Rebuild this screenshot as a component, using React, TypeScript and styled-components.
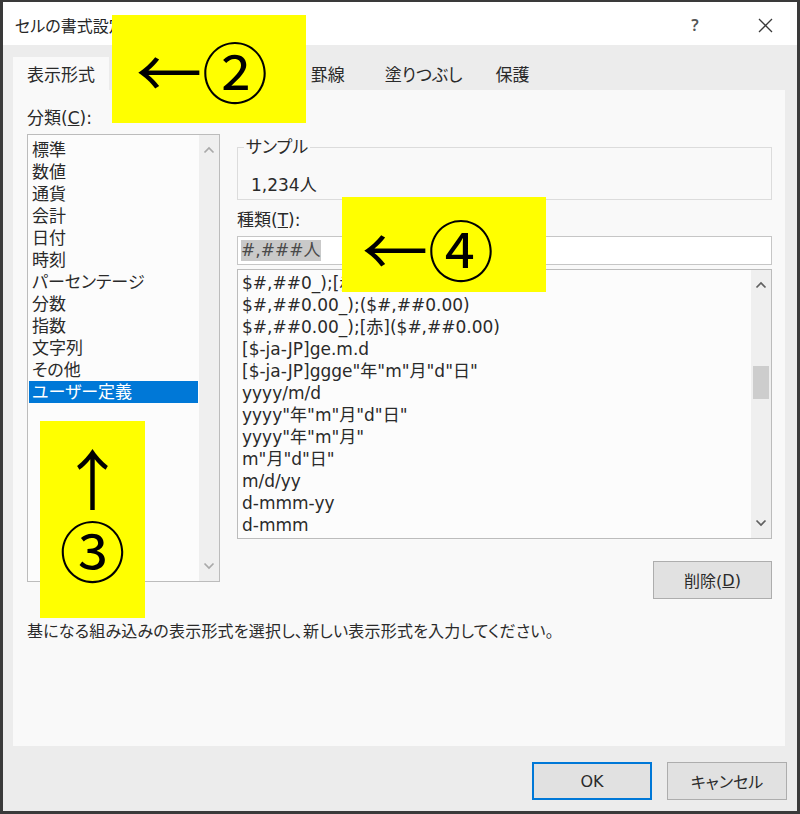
import React from "react";
import styled, { createGlobalStyle } from "styled-components";

const FONT = `"DejaVu Sans", "Noto Sans CJK JP", sans-serif`;
const CJK = `"Noto Sans CJK JP", sans-serif`;

const Global = createGlobalStyle`
  html, body { margin: 0; padding: 0; background: #ffffff; }
  body {
    font-family: ${FONT};
    font-feature-settings: "palt" 1;
    color: #2a2a2a;
  }
  * { box-sizing: border-box; }
`;

const Window = styled.div`
  position: relative;
  width: 800px;
  height: 814px;
  border: 3px solid #3a3a3a;
  border-top-width: 2px;
  background: #ececec;
  display: flex;
  flex-direction: column;
  overflow: hidden;
`;

const TitleBar = styled.div`
  height: 43px;
  flex: none;
  background: #ffffff;
  display: flex;
  align-items: center;
  padding: 3px 9px 0 12px;
`;

const Title = styled.div`
  font-size: 16px;
  color: #262626;
`;

const Controls = styled.div`
  margin-left: auto;
  display: flex;
  gap: 24px;
  align-items: center;
`;

const CtrlBtn = styled.div`
  width: 46px;
  height: 30px;
  display: flex;
  align-items: center;
  justify-content: center;
  color: #555;
  font-family: "Noto Sans", sans-serif;
  font-size: 16px;
  font-weight: 600;
`;

const TabStrip = styled.div`
  height: 45px;
  flex: none;
  display: flex;
  align-items: flex-end;
  padding-left: 10px;
`;

const Tab = styled.div<{ $active?: boolean; $pad?: number }>`
  height: ${(p) => (p.$active ? 33 : 30)}px;
  padding: ${(p) => (p.$active ? "3px 14px 0" : `0 ${p.$pad ?? 20}px`)};
  line-height: 30px;
  font-size: 17px;
  white-space: nowrap;
  background: ${(p) => (p.$active ? "#f9f9f9" : "transparent")};
  color: #2a2a2a;
`;

const Panel = styled.div`
  height: 656px;
  flex: none;
  margin: 0 12px 0 10px;
  background: #f9f9f9;
  padding: 18px 13px 0 14px;
  display: flex;
  flex-direction: column;
`;

const Columns = styled.div`
  display: flex;
  gap: 17px;
`;

const LeftCol = styled.div`
  width: 193px;
  flex: none;
  display: flex;
  flex-direction: column;
`;

const RightCol = styled.div`
  flex: 1;
  display: flex;
  flex-direction: column;
  padding-top: 29px;
`;

const FieldLabel = styled.div<{ $mt?: number }>`
  height: 20px;
  line-height: 20px;
  font-size: 17px;
  margin-top: ${(p) => p.$mt ?? 0}px;
  white-space: nowrap;
`;

const ListBox = styled.div<{ $h: number; $mt?: number }>`
  height: ${(p) => p.$h}px;
  margin-top: ${(p) => p.$mt ?? 0}px;
  border: 1px solid #bcbcbc;
  background: #fcfcfc;
  display: flex;
  overflow: hidden;
`;

const ListItems = styled.div<{ $pt: number }>`
  flex: 1;
  min-width: 0;
  padding-top: ${(p) => p.$pt}px;
  overflow: hidden;
`;

const Item = styled.div<{ $selected?: boolean }>`
  height: 22px;
  line-height: 22px;
  font-size: 17px;
  padding-left: 3px;
  margin: 0 1px;
  white-space: nowrap;
  background: ${(p) => (p.$selected ? "#0078d7" : "transparent")};
  color: ${(p) => (p.$selected ? "#ffffff" : "#2a2a2a")};
`;

const ScrollBar = styled.div`
  width: 20px;
  flex: none;
  background: #efefef;
  display: flex;
  flex-direction: column;
`;

const ScrollArrow = styled.div`
  height: 30px;
  flex: none;
  display: flex;
  align-items: center;
  justify-content: center;
`;

const Track = styled.div`
  flex: 1;
  display: flex;
  flex-direction: column;
`;

const Thumb = styled.div<{ $top: number; $h: number }>`
  margin: ${(p) => p.$top}px 2px 0;
  height: ${(p) => p.$h}px;
  background: #cdcdcd;
`;

const Sample = styled.fieldset`
  margin: 0;
  min-width: 0;
  padding: 18px 6px 4px;
  border: 1px solid #dcdcdc;
`;

const Legend = styled.legend`
  padding: 0 2px;
  font-size: 17px;
  line-height: 20px;
`;

const SampleValue = styled.div`
  padding-left: 7px;
  line-height: 20px;
  font-size: 17px;
`;

const Input = styled.div`
  height: 29px;
  margin-top: 6px;
  border: 1px solid #c6c6c6;
  background: #ffffff;
  padding-left: 3px;
  display: flex;
  align-items: center;
`;

const Selection = styled.span`
  background: #c9c9c9;
  color: #4a4a4a;
  font-size: 17px;
  line-height: 21px;
  padding-right: 1px;
`;

const ButtonRow = styled.div`
  display: flex;
  justify-content: flex-end;
  margin-top: 22px;
`;

const Button = styled.div<{ $w: number; $primary?: boolean }>`
  width: ${(p) => p.$w}px;
  height: 38px;
  background: #e1e1e1;
  border: ${(p) => (p.$primary ? "2px solid #0078d7" : "1px solid #adadad")};
  display: flex;
  align-items: center;
  justify-content: center;
  font-size: 16px;
  color: #2a2a2a;
  white-space: nowrap;
`;

const Description = styled.div`
  margin-top: 23px;
  line-height: 20px;
  font-size: 16px;
  letter-spacing: 0.2px;
  white-space: nowrap;
`;

const Footer = styled.div`
  flex: 1;
  display: flex;
  justify-content: flex-end;
  align-items: flex-start;
  gap: 15px;
  padding: 16px 10px 0 0;
`;

const Sticky = styled.div<{ $x: number; $y: number; $w: number; $h: number }>`
  position: absolute;
  left: ${(p) => p.$x}px;
  top: ${(p) => p.$y}px;
  width: ${(p) => p.$w}px;
  height: ${(p) => p.$h}px;
  background: #ffff00;
  font-family: ${CJK};
  color: #000;
  font-size: 66px;
  line-height: 1;
  display: flex;
`;

const RowNote = styled(Sticky)<{ $pl: number; $pt: number }>`
  align-items: center;
  padding-left: ${(p) => p.$pl}px;
  padding-top: ${(p) => p.$pt}px;
`;

const ColNote = styled(Sticky)`
  flex-direction: column;
  align-items: center;
  padding-top: 22px;
  gap: 6px;
`;

const Glyph = styled.span`
  display: block;
`;

const Chevron = ({ up, color }: { up?: boolean; color: string }) => (
  <svg width="12" height="8" viewBox="0 0 12 8">
    <polyline
      points={up ? "1.5,6.5 6,2 10.5,6.5" : "1.5,1.5 6,6 10.5,1.5"}
      fill="none"
      stroke={color}
      strokeWidth="1.7"
    />
  </svg>
);

const U = styled.span`
  text-decoration: underline;
`;

const categories = [
  "標準",
  "数値",
  "通貨",
  "会計",
  "日付",
  "時刻",
  "パーセンテージ",
  "分数",
  "指数",
  "文字列",
  "その他",
  "ユーザー定義",
];

const formats = [
  "$#,##0_);[赤]($#,##0)",
  "$#,##0.00_);($#,##0.00)",
  "$#,##0.00_);[赤]($#,##0.00)",
  "[$-ja-JP]ge.m.d",
  '[$-ja-JP]ggge"年"m"月"d"日"',
  "yyyy/m/d",
  'yyyy"年"m"月"d"日"',
  'yyyy"年"m"月"',
  'm"月"d"日"',
  "m/d/yy",
  "d-mmm-yy",
  "d-mmm",
];

export default function App() {
  return (
    <>
      <Global />
      <Window>
        <TitleBar>
          <Title>セルの書式設定</Title>
          <Controls>
            <CtrlBtn>?</CtrlBtn>
            <CtrlBtn>
              <svg width="15" height="15" viewBox="0 0 15 15">
                <path d="M1 1 L14 14 M14 1 L1 14" stroke="#3a3a3a" strokeWidth="1.3" />
              </svg>
            </CtrlBtn>
          </Controls>
        </TitleBar>

        <TabStrip>
          <Tab $active>表示形式</Tab>
          <Tab $pad={22}>配置</Tab>
          <Tab $pad={23.5}>フォント</Tab>
          <Tab $pad={21}>罫線</Tab>
          <Tab $pad={19}>塗りつぶし</Tab>
          <Tab $pad={14}>保護</Tab>
        </TabStrip>

        <Panel>
          <Columns>
            <LeftCol>
              <FieldLabel>
                分類(<U>C</U>):
              </FieldLabel>
              <ListBox $h={448} $mt={6}>
                <ListItems $pt={4}>
                  {categories.map((c, i) => (
                    <Item key={c} $selected={i === categories.length - 1}>
                      {c}
                    </Item>
                  ))}
                </ListItems>
                <ScrollBar>
                  <ScrollArrow>
                    <Chevron up color="#a9a9a9" />
                  </ScrollArrow>
                  <Track />
                  <ScrollArrow>
                    <Chevron color="#a9a9a9" />
                  </ScrollArrow>
                </ScrollBar>
              </ListBox>
            </LeftCol>

            <RightCol>
              <Sample>
                <Legend>サンプル</Legend>
                <SampleValue>1,234人</SampleValue>
              </Sample>
              <FieldLabel $mt={10}>
                種類(<U>T</U>):
              </FieldLabel>
              <Input>
                <Selection>#,###人</Selection>
              </Input>
              <ListBox $h={270} $mt={4}>
                <ListItems $pt={2}>
                  {formats.map((f) => (
                    <Item key={f}>{f}</Item>
                  ))}
                </ListItems>
                <ScrollBar>
                  <ScrollArrow>
                    <Chevron up color="#606060" />
                  </ScrollArrow>
                  <Track>
                    <Thumb $top={66} $h={33} />
                  </Track>
                  <ScrollArrow>
                    <Chevron color="#606060" />
                  </ScrollArrow>
                </ScrollBar>
              </ListBox>
              <ButtonRow>
                <Button $w={119}>
                  削除(<U>D</U>)
                </Button>
              </ButtonRow>
            </RightCol>
          </Columns>
          <Description>
            基になる組み込みの表示形式を選択し、新しい表示形式を入力してください。
          </Description>
        </Panel>

        <Footer>
          <Button $w={120} $primary>
            OK
          </Button>
          <Button $w={120}>キャンセル</Button>
        </Footer>

        <RowNote $x={109} $y={13} $w={194} $h={108} $pl={24} $pt={0}>
          <Glyph>←</Glyph>
          <Glyph>②</Glyph>
        </RowNote>
        <RowNote $x={339} $y={195} $w={204} $h={95} $pl={20} $pt={4}>
          <Glyph>←</Glyph>
          <Glyph>④</Glyph>
        </RowNote>
        <ColNote $x={37} $y={419} $w={105} $h={197}>
          <Glyph>↑</Glyph>
          <Glyph>③</Glyph>
        </ColNote>
      </Window>
    </>
  );
}
